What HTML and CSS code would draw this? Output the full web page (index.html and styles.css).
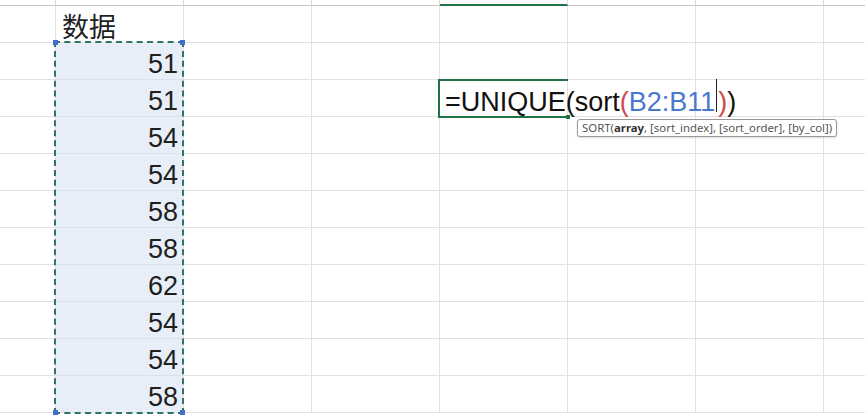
FILE: index.html
```html
<!DOCTYPE html>
<html lang="zh">
  <head>
    <meta charset="UTF-8" />
    <title>UNIQUE sort</title>
    <link rel="stylesheet" href="styles.css">
  </head>
  <body>
    <div class="sheet">
      <div class="grid" id="grid"></div>

      <!-- sélection B2:B11 -->
      <div class="ants">
        <span class="handle tl"></span>
        <span class="handle tr"></span>
        <span class="handle bl"></span>
        <span class="handle br"></span>
      </div>

      <!-- cellule active E3 -->
      <div class="active-cell">
        <span class="fill-handle"></span>
      </div>
      <div class="formula">=UNIQUE(sort<span class="red">(</span><span class="blue">B2:B11</span><span class="caret"></span><span class="red">)</span>)</div>

      <div class="tip">SORT(<b>array</b>, [sort_index], [sort_order], [by_col])</div>
    </div>

    <script>
      const data = ["数据", 51, 51, 54, 54, 58, 58, 62, 54, 54, 58];
      const grid = document.getElementById("grid");
      const cols = 8;
      const rows = 12;

      for (let r = 0; r < rows; r++) {
        for (let c = 0; c < cols; c++) {
          const cell = document.createElement("div");
          cell.className = "cell";
          if (r === 0) {
            cell.classList.add("head");
            if (c === 4) cell.classList.add("head-active");
          } else if (c === 1) {
            const v = data[r - 1];
            if (r === 1) {
              cell.classList.add("title");
            } else {
              cell.classList.add("num", "selected");
            }
            cell.textContent = v;
          }
          grid.appendChild(cell);
        }
      }
    </script>
  </body>
</html>
```

FILE: styles.css
```css
body {
  margin: 0;
  padding: 0;
  background-color: #fff;
  font-family: "Liberation Sans", "Noto Sans CJK SC", sans-serif;
  color: #1f1f1f;
  overflow: hidden;
}
.sheet {
  position: relative;
  width: 865px;
  height: 419px;
  overflow: hidden;
}
.grid {
  display: grid;
  grid-template-columns: 56px repeat(6, 128px) 42px;
  grid-template-rows: 6px repeat(11, 37px);
}
.cell {
  box-sizing: border-box;
  border-right: 1px solid #e1e1e1;
  border-bottom: 1px solid #e1e1e1;
  display: flex;
  align-items: flex-end;
  white-space: nowrap;
}
.head {
  border-right-color: #dcdcdc;
  border-bottom: 1px solid #c4c4c4;
}
.head-active {
  border-bottom: 2px solid #217346;
}
.title {
  font-family: "Noto Sans CJK SC", sans-serif;
  font-size: 27px;
  line-height: 30px;
  padding: 0 0 1px 6px;
}
.num {
  justify-content: flex-end;
  font-size: 27px;
  line-height: 26px;
  padding: 0 5px 2px 0;
}
.selected {
  background-color: #e8eef8;
  border-bottom-color: #dbe1ec;
}
.ants {
  position: absolute;
  left: 54px;
  top: 41px;
  width: 130px;
  height: 373px;
  box-sizing: border-box;
  border: 2px dashed #2e7565;
}
.handle {
  position: absolute;
  width: 5px;
  height: 5px;
  background-color: #3f6fcf;
}
.tl { left: -3px; top: -3px; }
.tr { right: -3px; top: -3px; }
.bl { left: -3px; bottom: -3px; }
.br { right: -3px; bottom: -3px; }
.active-cell {
  position: absolute;
  left: 438px;
  top: 79px;
  width: 130px;
  height: 39px;
  box-sizing: border-box;
  border: 2px solid #217346;
  border-right: none;
}
.fill-handle {
  position: absolute;
  right: -2px;
  bottom: -3px;
  width: 4px;
  height: 4px;
  background-color: #217346;
}
.formula {
  position: absolute;
  left: 445px;
  top: 87px;
  font-size: 27px;
  line-height: 31px;
  white-space: nowrap;
  color: #111;
}
.red {
  color: #d0494b;
}
.blue {
  color: #4a78cf;
}
.caret {
  display: inline-block;
  width: 1px;
  height: 33px;
  margin: -9px 1px 0 1px;
  background-color: #222;
  vertical-align: -1px;
}
.tip {
  position: absolute;
  left: 577px;
  top: 119px;
  width: 260px;
  height: 18px;
  box-sizing: border-box;
  border: 1px solid #9a9a9a;
  border-radius: 3px;
  background-color: #fff;
  box-shadow: 0 1px 2px rgba(0, 0, 0, 0.15);
  font-family: "Noto Sans", sans-serif;
  font-size: 11.4px;
  line-height: 16px;
  padding-left: 4px;
  color: #555;
  white-space: nowrap;
}
.tip b {
  color: #333;
}
```
